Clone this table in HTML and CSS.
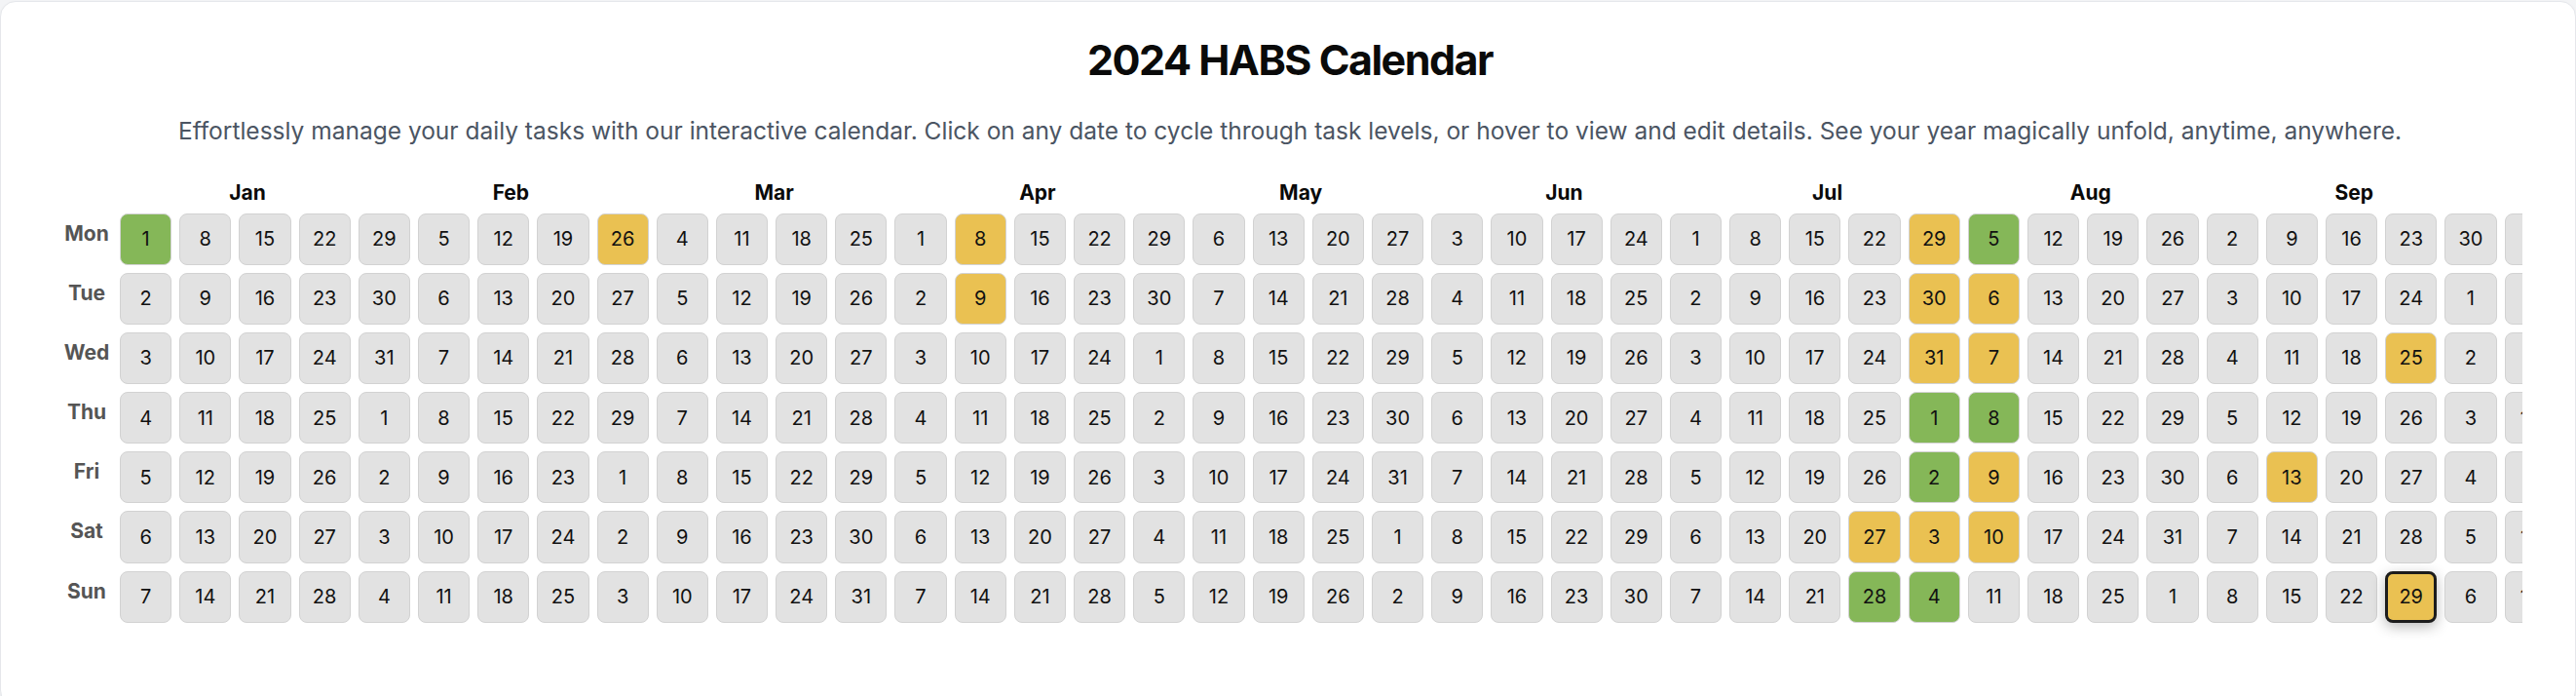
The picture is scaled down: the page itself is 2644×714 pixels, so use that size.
FILE: index.html
```html
<!DOCTYPE html>
<html lang="en">
<head>
<meta charset="utf-8">
<title>2024 HABS Calendar</title>
<link rel="stylesheet" href="styles.css">
</head>
<body>
<main class="card">
  <header class="header">
    <h1 class="title">2024 HABS Calendar</h1>
    <p class="subtitle">Effortlessly manage your daily tasks with our interactive calendar. Click on any date to cycle through task levels, or hover to view and edit details. See your year magically unfold, anytime, anywhere.</p>
  </header>
  <section class="calendar">
    <div class="day-labels">
      <div class="day-label">Mon</div>
      <div class="day-label">Tue</div>
      <div class="day-label">Wed</div>
      <div class="day-label">Thu</div>
      <div class="day-label">Fri</div>
      <div class="day-label">Sat</div>
      <div class="day-label">Sun</div>
    </div>
    <div class="scroller">
      <div class="calendar-inner">
        <div class="months">
          <div class="month">Jan</div><div class="month">Feb</div><div class="month">Mar</div><div class="month">Apr</div>
          <div class="month">May</div><div class="month">Jun</div><div class="month">Jul</div><div class="month">Aug</div>
          <div class="month">Sep</div><div class="month">Oct</div><div class="month">Nov</div><div class="month">Dec</div>
        </div>
        <div class="weeks">
          <div class="week"><span class="day done">1</span><span class="day">2</span><span class="day">3</span><span class="day">4</span><span class="day">5</span><span class="day">6</span><span class="day">7</span></div>
          <div class="week"><span class="day">8</span><span class="day">9</span><span class="day">10</span><span class="day">11</span><span class="day">12</span><span class="day">13</span><span class="day">14</span></div>
          <div class="week"><span class="day">15</span><span class="day">16</span><span class="day">17</span><span class="day">18</span><span class="day">19</span><span class="day">20</span><span class="day">21</span></div>
          <div class="week"><span class="day">22</span><span class="day">23</span><span class="day">24</span><span class="day">25</span><span class="day">26</span><span class="day">27</span><span class="day">28</span></div>
          <div class="week"><span class="day">29</span><span class="day">30</span><span class="day">31</span><span class="day">1</span><span class="day">2</span><span class="day">3</span><span class="day">4</span></div>
          <div class="week"><span class="day">5</span><span class="day">6</span><span class="day">7</span><span class="day">8</span><span class="day">9</span><span class="day">10</span><span class="day">11</span></div>
          <div class="week"><span class="day">12</span><span class="day">13</span><span class="day">14</span><span class="day">15</span><span class="day">16</span><span class="day">17</span><span class="day">18</span></div>
          <div class="week"><span class="day">19</span><span class="day">20</span><span class="day">21</span><span class="day">22</span><span class="day">23</span><span class="day">24</span><span class="day">25</span></div>
          <div class="week"><span class="day partial">26</span><span class="day">27</span><span class="day">28</span><span class="day">29</span><span class="day">1</span><span class="day">2</span><span class="day">3</span></div>
          <div class="week"><span class="day">4</span><span class="day">5</span><span class="day">6</span><span class="day">7</span><span class="day">8</span><span class="day">9</span><span class="day">10</span></div>
          <div class="week"><span class="day">11</span><span class="day">12</span><span class="day">13</span><span class="day">14</span><span class="day">15</span><span class="day">16</span><span class="day">17</span></div>
          <div class="week"><span class="day">18</span><span class="day">19</span><span class="day">20</span><span class="day">21</span><span class="day">22</span><span class="day">23</span><span class="day">24</span></div>
          <div class="week"><span class="day">25</span><span class="day">26</span><span class="day">27</span><span class="day">28</span><span class="day">29</span><span class="day">30</span><span class="day">31</span></div>
          <div class="week"><span class="day">1</span><span class="day">2</span><span class="day">3</span><span class="day">4</span><span class="day">5</span><span class="day">6</span><span class="day">7</span></div>
          <div class="week"><span class="day partial">8</span><span class="day partial">9</span><span class="day">10</span><span class="day">11</span><span class="day">12</span><span class="day">13</span><span class="day">14</span></div>
          <div class="week"><span class="day">15</span><span class="day">16</span><span class="day">17</span><span class="day">18</span><span class="day">19</span><span class="day">20</span><span class="day">21</span></div>
          <div class="week"><span class="day">22</span><span class="day">23</span><span class="day">24</span><span class="day">25</span><span class="day">26</span><span class="day">27</span><span class="day">28</span></div>
          <div class="week"><span class="day">29</span><span class="day">30</span><span class="day">1</span><span class="day">2</span><span class="day">3</span><span class="day">4</span><span class="day">5</span></div>
          <div class="week"><span class="day">6</span><span class="day">7</span><span class="day">8</span><span class="day">9</span><span class="day">10</span><span class="day">11</span><span class="day">12</span></div>
          <div class="week"><span class="day">13</span><span class="day">14</span><span class="day">15</span><span class="day">16</span><span class="day">17</span><span class="day">18</span><span class="day">19</span></div>
          <div class="week"><span class="day">20</span><span class="day">21</span><span class="day">22</span><span class="day">23</span><span class="day">24</span><span class="day">25</span><span class="day">26</span></div>
          <div class="week"><span class="day">27</span><span class="day">28</span><span class="day">29</span><span class="day">30</span><span class="day">31</span><span class="day">1</span><span class="day">2</span></div>
          <div class="week"><span class="day">3</span><span class="day">4</span><span class="day">5</span><span class="day">6</span><span class="day">7</span><span class="day">8</span><span class="day">9</span></div>
          <div class="week"><span class="day">10</span><span class="day">11</span><span class="day">12</span><span class="day">13</span><span class="day">14</span><span class="day">15</span><span class="day">16</span></div>
          <div class="week"><span class="day">17</span><span class="day">18</span><span class="day">19</span><span class="day">20</span><span class="day">21</span><span class="day">22</span><span class="day">23</span></div>
          <div class="week"><span class="day">24</span><span class="day">25</span><span class="day">26</span><span class="day">27</span><span class="day">28</span><span class="day">29</span><span class="day">30</span></div>
          <div class="week"><span class="day">1</span><span class="day">2</span><span class="day">3</span><span class="day">4</span><span class="day">5</span><span class="day">6</span><span class="day">7</span></div>
          <div class="week"><span class="day">8</span><span class="day">9</span><span class="day">10</span><span class="day">11</span><span class="day">12</span><span class="day">13</span><span class="day">14</span></div>
          <div class="week"><span class="day">15</span><span class="day">16</span><span class="day">17</span><span class="day">18</span><span class="day">19</span><span class="day">20</span><span class="day">21</span></div>
          <div class="week"><span class="day">22</span><span class="day">23</span><span class="day">24</span><span class="day">25</span><span class="day">26</span><span class="day partial">27</span><span class="day done">28</span></div>
          <div class="week"><span class="day partial">29</span><span class="day partial">30</span><span class="day partial">31</span><span class="day done">1</span><span class="day done">2</span><span class="day partial">3</span><span class="day done">4</span></div>
          <div class="week"><span class="day done">5</span><span class="day partial">6</span><span class="day partial">7</span><span class="day done">8</span><span class="day partial">9</span><span class="day partial">10</span><span class="day">11</span></div>
          <div class="week"><span class="day">12</span><span class="day">13</span><span class="day">14</span><span class="day">15</span><span class="day">16</span><span class="day">17</span><span class="day">18</span></div>
          <div class="week"><span class="day">19</span><span class="day">20</span><span class="day">21</span><span class="day">22</span><span class="day">23</span><span class="day">24</span><span class="day">25</span></div>
          <div class="week"><span class="day">26</span><span class="day">27</span><span class="day">28</span><span class="day">29</span><span class="day">30</span><span class="day">31</span><span class="day">1</span></div>
          <div class="week"><span class="day">2</span><span class="day">3</span><span class="day">4</span><span class="day">5</span><span class="day">6</span><span class="day">7</span><span class="day">8</span></div>
          <div class="week"><span class="day">9</span><span class="day">10</span><span class="day">11</span><span class="day">12</span><span class="day partial">13</span><span class="day">14</span><span class="day">15</span></div>
          <div class="week"><span class="day">16</span><span class="day">17</span><span class="day">18</span><span class="day">19</span><span class="day">20</span><span class="day">21</span><span class="day">22</span></div>
          <div class="week"><span class="day">23</span><span class="day">24</span><span class="day partial">25</span><span class="day">26</span><span class="day">27</span><span class="day">28</span><span class="day partial selected">29</span></div>
          <div class="week"><span class="day">30</span><span class="day">1</span><span class="day">2</span><span class="day">3</span><span class="day">4</span><span class="day">5</span><span class="day">6</span></div>
          <div class="week"><span class="day">7</span><span class="day">8</span><span class="day">9</span><span class="day">10</span><span class="day">11</span><span class="day">12</span><span class="day">13</span></div>
          <div class="week"><span class="day">14</span><span class="day">15</span><span class="day">16</span><span class="day">17</span><span class="day">18</span><span class="day">19</span><span class="day">20</span></div>
          <div class="week"><span class="day">21</span><span class="day">22</span><span class="day">23</span><span class="day">24</span><span class="day">25</span><span class="day">26</span><span class="day">27</span></div>
          <div class="week"><span class="day">28</span><span class="day">29</span><span class="day">30</span><span class="day">31</span><span class="day">1</span><span class="day">2</span><span class="day">3</span></div>
          <div class="week"><span class="day">4</span><span class="day">5</span><span class="day">6</span><span class="day">7</span><span class="day">8</span><span class="day">9</span><span class="day">10</span></div>
          <div class="week"><span class="day">11</span><span class="day">12</span><span class="day">13</span><span class="day">14</span><span class="day">15</span><span class="day">16</span><span class="day">17</span></div>
          <div class="week"><span class="day">18</span><span class="day">19</span><span class="day">20</span><span class="day">21</span><span class="day">22</span><span class="day">23</span><span class="day">24</span></div>
          <div class="week"><span class="day">25</span><span class="day">26</span><span class="day">27</span><span class="day">28</span><span class="day">29</span><span class="day">30</span><span class="day">1</span></div>
          <div class="week"><span class="day">2</span><span class="day">3</span><span class="day">4</span><span class="day">5</span><span class="day">6</span><span class="day">7</span><span class="day">8</span></div>
          <div class="week"><span class="day">9</span><span class="day">10</span><span class="day">11</span><span class="day">12</span><span class="day">13</span><span class="day">14</span><span class="day">15</span></div>
          <div class="week"><span class="day">16</span><span class="day">17</span><span class="day">18</span><span class="day">19</span><span class="day">20</span><span class="day">21</span><span class="day">22</span></div>
          <div class="week"><span class="day">23</span><span class="day">24</span><span class="day">25</span><span class="day">26</span><span class="day">27</span><span class="day">28</span><span class="day">29</span></div>
          <div class="week"><span class="day">30</span><span class="day">31</span><span class="day">1</span><span class="day">2</span><span class="day">3</span><span class="day">4</span><span class="day">5</span></div>
        </div>
      </div>
    </div>
  </section>
</main>
</body>
</html>
```

FILE: styles.css
```css
html, body {
  margin: 0;
}

body {
  padding-top: 1px;
  background: #f3f4f6;
  font-family: Inter, "Noto Sans", "Liberation Sans", sans-serif;
  color: #111;
  overflow: hidden;
}

.card {
  background: #ffffff;
  border: 1px solid #e5e7eb;
  border-radius: 16px;
  box-shadow: 0 1px 3px rgba(0, 0, 0, 0.05);
  padding: 32px 54px 60px 58px;
}

.header {
  text-align: center;
}

.title {
  margin: 0;
  font-size: 43px;
  line-height: 54px;
  font-weight: 700;
  letter-spacing: -1.5px;
  color: #0a0a0a;
}

.subtitle {
  margin: 29px 0 0;
  font-size: 24.5px;
  line-height: 34.5px;
  color: #4b5563;
}

.calendar {
  display: flex;
  margin-top: 33px;
}

.day-labels {
  flex-shrink: 0;
  width: 60px;
  padding-top: 34px;
  display: flex;
  flex-direction: column;
  gap: 8px;
}

.day-label {
  height: 53.2px;
  box-sizing: border-box;
  padding-top: 7px;
  line-height: 28px;
  text-align: center;
  font-size: 21px;
  font-weight: 700;
  color: #555555;
}

.scroller {
  flex: 1;
  min-width: 0;
  overflow-x: auto;
  scrollbar-width: none;
}

.calendar-inner {
  width: max-content;
}

.months {
  display: flex;
  height: 26px;
  margin-bottom: 4px;
}

.month {
  flex: 1;
  text-align: center;
  font-size: 21px;
  line-height: 26px;
  font-weight: 700;
  color: #0a0a0a;
}

.weeks {
  display: flex;
  gap: 8px;
  padding: 4px 4px 24px;
}

.week {
  display: flex;
  flex-direction: column;
  gap: 8px;
}

.day {
  box-sizing: border-box;
  width: 53.2px;
  height: 53.2px;
  display: flex;
  align-items: center;
  justify-content: center;
  background: #e2e2e2;
  border: 1px solid #d2d2d2;
  border-radius: 8px;
  font-size: 20px;
  color: #111;
}

.day.partial {
  background: #eac152;
}

.day.done {
  background: #85b758;
}

.day.selected {
  border: 3px solid #1c1c1c;
  box-shadow: 0 4px 14px rgba(0, 0, 0, 0.28);
}
```
